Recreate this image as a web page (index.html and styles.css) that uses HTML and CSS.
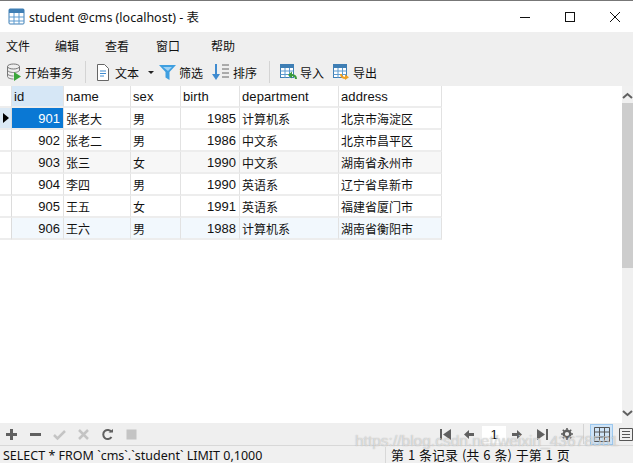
FILE: index.html
```html
<!DOCTYPE html>
<html lang="zh">
<head>
  <meta charset="UTF-8">
  <title>student @cms (localhost) - 表</title>
  <link rel="stylesheet" href="styles.css">
</head>
<body>
  <div class="window">
    <div class="titlebar">
      <svg class="app-icon" width="18" height="18" viewBox="0 0 18 18">
        <rect x="1" y="1" width="15" height="15" rx="1" fill="#fff" stroke="#3f7fb5"/>
        <rect x="1" y="1" width="15" height="4" fill="#3f7fb5"/>
        <path d="M1 9h15M1 13h15M6 5v11M11 5v11" stroke="#5c9bd0" fill="none"/>
      </svg>
      <span class="title">student @cms (localhost) - 表</span>
      <div class="win-btns">
        <svg width="12" height="12" viewBox="0 0 12 12"><path d="M1 6.500h10" stroke="#111"/></svg>
        <svg width="12" height="12" viewBox="0 0 12 12"><rect x="1.500" y="1.500" width="9" height="9" fill="none" stroke="#111"/></svg>
        <svg width="12" height="12" viewBox="0 0 12 12"><path d="M1 1l10 10M11 1L1 11" stroke="#111"/></svg>
      </div>
    </div>

    <div class="menubar">
      <span class="menu m1">文件</span>
      <span class="menu m2">编辑</span>
      <span class="menu m3">查看</span>
      <span class="menu m4">窗口</span>
      <span class="menu">帮助</span>
    </div>

    <div class="toolbar">
      <span class="tool">
        <svg width="17" height="18" viewBox="0 0 17 18">
          <ellipse cx="7.500" cy="3.500" rx="6" ry="2.500" fill="#eee" stroke="#777"/>
          <path d="M1.500 3.500v10c0 1.500 3 2.500 6 2.500M13.500 3.500v4M1.500 7c0 1.500 3 2.500 6 2.500s6-1 6-2.500M1.500 10.500c0 1.500 3 2.500 6 2.500" fill="none" stroke="#777"/>
          <path d="M8 9l7 4.500L8 18z" fill="#3aa63a"/>
        </svg>
        开始事务
      </span>
      <span class="sep"></span>
      <span class="tool tool-text">
        <svg width="14" height="17" viewBox="0 0 14 17">
          <path d="M1.500 .5h7l4 4v12h-11z" fill="#fff" stroke="#666"/>
          <path d="M4 7h6M4 9.500h6M4 12h4" stroke="#3f8bd0"/>
        </svg>
        文本
        <span class="caret"></span>
      </span>
      <span class="tool tool-filter">
        <svg width="17" height="17" viewBox="0 0 17 17"><path d="M0 1h17l-6.500 7v8l-4-2.500V8z" fill="#3f9fe0"/><path d="M4 3h9l-4 4z" fill="#9ed2f5"/></svg>
        筛选
      </span>
      <span class="tool tool-sort">
        <svg width="18" height="18" viewBox="0 0 18 18">
          <path d="M4 1v12" stroke="#3f8bd0" stroke-width="2"/>
          <path d="M0 11h8l-4 6z" fill="#3f8bd0"/>
          <path d="M10 2h7M10 6h7M10 10h7M10 14h7" stroke="#666"/>
        </svg>
        排序
      </span>
      <span class="sep"></span>
      <span class="tool tool-import">
        <svg width="17" height="16" viewBox="0 0 17 16">
          <rect x=".5" y=".5" width="13" height="13" fill="#fff" stroke="#3f7fb5"/>
          <rect x=".5" y=".5" width="13" height="3.500" fill="#3f7fb5"/>
          <path d="M.5 7h13M.5 10.500h13M5 4v10M9.500 4v10" stroke="#5c9bd0"/>
          <path d="M16 15c0-3-2-4-5-4" fill="none" stroke="#3a9a3a" stroke-width="2"/>
          <path d="M12 7.500v7l-4-3.500z" fill="#3a9a3a"/>
        </svg>
        导入
      </span>
      <span class="tool tool-export">
        <svg width="17" height="16" viewBox="0 0 17 16">
          <rect x=".5" y=".5" width="13" height="13" fill="#fff" stroke="#3f7fb5"/>
          <rect x=".5" y=".5" width="13" height="3.500" fill="#3f7fb5"/>
          <path d="M.5 7h13M.5 10.500h13M5 4v10M9.500 4v10" stroke="#5c9bd0"/>
          <path d="M8 10c0 3 2 4 5 4" fill="none" stroke="#f0a020" stroke-width="2"/>
          <path d="M12 10.500v5.500l4-2.700z" fill="#f0a020"/>
        </svg>
        导出
      </span>
    </div>

    <div class="content">
      <div class="grid-area">
        <table class="grid">
          <thead>
            <tr>
              <th class="c-mark"></th>
              <th class="c-id active">id</th>
              <th class="c-name">name</th>
              <th class="c-sex">sex</th>
              <th class="c-birth">birth</th>
              <th class="c-dept">department</th>
              <th class="c-addr">address</th>
            </tr>
          </thead>
          <tbody>
            <tr>
              <td class="mark current"><span class="arrow"></span></td>
              <td class="num selected">901</td><td>张老大</td><td>男</td><td class="num">1985</td><td>计算机系</td><td>北京市海淀区</td>
            </tr>
            <tr>
              <td class="mark"></td>
              <td class="num">902</td><td>张老二</td><td>男</td><td class="num">1986</td><td>中文系</td><td>北京市昌平区</td>
            </tr>
            <tr class="odd">
              <td class="mark"></td>
              <td class="num">903</td><td>张三</td><td>女</td><td class="num">1990</td><td>中文系</td><td>湖南省永州市</td>
            </tr>
            <tr>
              <td class="mark"></td>
              <td class="num">904</td><td>李四</td><td>男</td><td class="num">1990</td><td>英语系</td><td>辽宁省阜新市</td>
            </tr>
            <tr>
              <td class="mark"></td>
              <td class="num">905</td><td>王五</td><td>女</td><td class="num">1991</td><td>英语系</td><td>福建省厦门市</td>
            </tr>
            <tr class="hover">
              <td class="mark"></td>
              <td class="num">906</td><td>王六</td><td>男</td><td class="num">1988</td><td>计算机系</td><td>湖南省衡阳市</td>
            </tr>
          </tbody>
        </table>
      </div>
      <div class="scrollbar">
        <svg width="11" height="8" viewBox="0 0 11 8"><path d="M1 6l4.500-4L10 6" fill="none" stroke="#606060" stroke-width="2"/></svg>
        <div class="thumb"></div>
        <svg width="11" height="8" viewBox="0 0 11 8"><path d="M1 2l4.500 4L10 2" fill="none" stroke="#606060" stroke-width="2"/></svg>
      </div>
    </div>

    <div class="actionbar">
      <svg width="13" height="13" viewBox="0 0 13 13"><path d="M6.500 1v11M1 6.500h11" stroke="#606060" stroke-width="3"/></svg>
      <svg width="13" height="13" viewBox="0 0 13 13"><path d="M1 6.500h11" stroke="#606060" stroke-width="3"/></svg>
      <svg width="13" height="13" viewBox="0 0 13 13"><path d="M1 7l3.500 3.500L12 3" fill="none" stroke="#c4c4c4" stroke-width="2.500"/></svg>
      <svg width="13" height="13" viewBox="0 0 13 13"><path d="M2 2l9 9M11 2l-9 9" stroke="#c4c4c4" stroke-width="2.500"/></svg>
      <svg width="13" height="13" viewBox="0 0 13 13"><path d="M10.500 4A4.500 4.500 0 1 0 10.500 9" fill="none" stroke="#606060" stroke-width="2"/><path d="M7.500 4.500h4.500V1z" fill="#606060"/></svg>
      <svg width="13" height="13" viewBox="0 0 13 13"><rect x="1.500" y="1.500" width="10" height="10" fill="#c4c4c4"/></svg>

      <div class="pager">
        <svg width="12" height="11" viewBox="0 0 12 11"><path d="M1 0v11" stroke="#606060" stroke-width="2"/><path d="M11 0v11L3 5.500z" fill="#606060"/></svg>
        <svg width="12" height="11" viewBox="0 0 12 11"><path d="M6 1v9L1 5.500z" fill="#606060"/><path d="M5 5.500h6" stroke="#606060" stroke-width="3"/></svg>
        <span class="page-no">1</span>
        <svg width="12" height="11" viewBox="0 0 12 11"><path d="M6 1v9l5-4.500z" fill="#606060"/><path d="M1 5.500h6" stroke="#606060" stroke-width="3"/></svg>
        <svg class="pager-last" width="12" height="11" viewBox="0 0 12 11"><path d="M11 0v11" stroke="#606060" stroke-width="2"/><path d="M1 0v11l8-5.500z" fill="#606060"/></svg>
        <svg class="pager-gear" width="12" height="12" viewBox="0 0 12 12"><circle cx="6" cy="6" r="3.300" fill="none" stroke="#606060" stroke-width="2.400"/><path d="M6 0v2M6 10v2M0 6h2M10 6h2M1.800 1.800l1.400 1.400M8.800 8.800l1.400 1.400M10.200 1.800L8.800 3.200M3.200 8.800l-1.400 1.400" stroke="#606060" stroke-width="1.600"/></svg>
      </div>
      <span class="bar-sep"></span>
      <span class="view-btn on">
        <svg width="16" height="15" viewBox="0 0 16 15"><path d="M.5.500h15v14H.5zM.5 5h15M.5 10h15M5.500.5v14M10.500.5v14" fill="none" stroke="#555"/></svg>
      </span>
      <span class="view-btn">
        <svg width="14" height="13" viewBox="0 0 14 13"><path d="M.5.500h13v12H.5z" fill="none" stroke="#555"/><path d="M3 3.500h8M3 6.500h8M3 9.500h8" stroke="#555"/></svg>
      </span>
    </div>

    <div class="statusbar">
      <span class="sql">SELECT * FROM `cms`.`student` LIMIT 0,1000</span>
      <span class="info">第 1 条记录 (共 6 条) 于第 1 页</span>
    </div>

    <span class="watermark">https://blog.csdn.net/weixin_43678581</span>
  </div>
</body>
</html>
```

FILE: styles.css
```css
* {
  box-sizing: border-box;
}
html, body {
  margin: 0;
  padding: 0;
}
body {
  width: 633px;
  height: 463px;
  overflow: hidden;
  font-family: "Noto Sans CJK SC", "Liberation Sans", sans-serif;
  font-size: 12px;
  color: #111;
  background: #fff;
}
.window {
  position: relative;
  height: 463px;
  display: flex;
  flex-direction: column;
  border-top: 1px solid #777;
}
.titlebar {
  height: 31px;
  display: flex;
  align-items: center;
  padding-left: 8px;
  background: #fff;
  flex: none;
}
.title {
  margin-left: 3px;
  font-family: "Noto Sans", "Noto Sans CJK SC", sans-serif;
  font-size: 12.500px;
}
.win-btns {
  margin-left: auto;
  display: flex;
  gap: 33px;
  padding-right: 12px;
}
.menubar {
  height: 26px;
  display: flex;
  align-items: center;
  padding-left: 6px;
  background: #efefef;
  flex: none;
}
.menu {
  width: 49px;
}
.m1 { width: 49px; }
.m2 { width: 50px; }
.m3 { width: 51px; }
.m4 { width: 55px; }
.toolbar {
  height: 28px;
  display: flex;
  align-items: center;
  padding-left: 6px;
  background: #efefef;
  flex: none;
}
.tool {
  display: flex;
  align-items: center;
  gap: 2px;
  white-space: nowrap;
}
.tool-text {
  gap: 5px;
}
.caret {
  width: 0;
  height: 0;
  margin-left: 4px;
  border-left: 3px solid transparent;
  border-right: 3px solid transparent;
  border-top: 3px solid #222;
}
.tool-filter {
  margin-left: 5px;
  gap: 3px;
}
.tool-sort {
  margin-left: 9px;
  gap: 3px;
}
.sep {
  width: 1px;
  height: 22px;
  margin: 0 10px 0 12px;
  background: #d4d4d4;
}
.tool-import {
  gap: 3px;
  margin-right: 9px;
}
.tool-export {
  gap: 3px;
}
.content {
  flex: 1;
  display: flex;
  min-height: 0;
}
.grid-area {
  flex: 1;
  background: #fff;
}
.grid {
  border-collapse: separate;
  border-spacing: 0;
  table-layout: fixed;
  width: 442px;
}
.grid th, .grid td {
  padding: 0 2px;
  border-right: 1px solid #e2e2e2;
  border-bottom: 2px solid #ededed;
  font-weight: normal;
  text-align: left;
  white-space: nowrap;
  overflow: hidden;
}
.grid th {
  height: 22px;
  font-family: "Liberation Sans", sans-serif;
  font-size: 13px;
  letter-spacing: 0.1px;
  background: #fff;
}
.grid td {
  height: 22px;
  font-size: 12px;
}
.c-mark { width: 12px; }
.c-id { width: 52px; }
.c-name { width: 67px; }
.c-sex { width: 50px; }
.c-birth { width: 59px; }
.c-dept { width: 99px; }
.c-addr { width: 103px; }
.grid th.active {
  background: #d6e7f6;
}
.grid td.num {
  text-align: right;
  padding-right: 3px;
  font-family: "Liberation Sans", sans-serif;
  font-size: 13px;
}
.grid td.selected {
  background: #0a78d4;
  color: #fff;
}
.grid td.mark {
  padding: 0;
  border-right: 1px solid #dcdcdc;
}
.grid td.current {
  background: #dbe9f5;
}
.arrow {
  display: block;
  width: 0;
  height: 0;
  margin-left: 3px;
  border-top: 5px solid transparent;
  border-bottom: 5px solid transparent;
  border-left: 6px solid #000;
}
.odd td {
  background: #f7f7f7;
}
.hover td {
  background: #f2f8fd;
}
.odd td.mark, .hover td.mark {
  background: #fff;
}
.scrollbar {
  width: 11px;
  display: flex;
  flex-direction: column;
  align-items: center;
  justify-content: space-between;
  padding: 6px 0;
  position: relative;
  background: #f0f0f0;
}
.thumb {
  position: absolute;
  top: 17px;
  left: 0;
  right: 0;
  height: 165px;
  background: #cdcdcd;
}
.actionbar {
  height: 23px;
  display: flex;
  align-items: center;
  gap: 11px;
  padding-left: 5px;
  background: #efefef;
  border-bottom: 1px solid #d8d8d8;
  flex: none;
}
.pager {
  margin-left: auto;
  display: flex;
  align-items: center;
  gap: 11px;
}
.page-no {
  width: 24px;
  height: 17px;
  margin: 0 -6px 0 -4px;
  background: #fff;
  text-align: center;
  font-family: "Liberation Sans", sans-serif;
  font-size: 13px;
  line-height: 17px;
}
.pager-last, .pager-gear {
  margin-left: 2px;
}
.bar-sep {
  width: 1px;
  height: 20px;
  margin-left: -1px;
  background: #d4d4d4;
}
.view-btn {
  display: flex;
  align-items: center;
  justify-content: center;
  width: 14px;
  height: 21px;
  margin-left: -5px;
}
.view-btn.on {
  width: 23px;
  margin-left: -5px;
  background: #cfe4f7;
  border: 1px solid #9cc8ee;
}
.statusbar {
  height: 17px;
  display: flex;
  align-items: center;
  background: #f0f0f0;
  flex: none;
  padding-top: 1px;
}
.sql {
  width: 385px;
  padding-left: 3px;
  font-family: "Noto Sans", sans-serif;
  font-size: 12.500px;
  white-space: nowrap;
}
.info {
  padding-left: 5px;
  border-left: 1px solid #d8d8d8;
  font-size: 13px;
  line-height: 16px;
  word-spacing: 1px;
  white-space: nowrap;
}
.watermark {
  position: absolute;
  left: 355px;
  top: 431px;
  font-family: "Liberation Sans", sans-serif;
  font-size: 15.500px;
  color: rgba(255, 255, 255, 0.55);
  text-shadow: 0 0 1px rgba(90, 90, 90, 0.5);
  white-space: nowrap;
}
```
